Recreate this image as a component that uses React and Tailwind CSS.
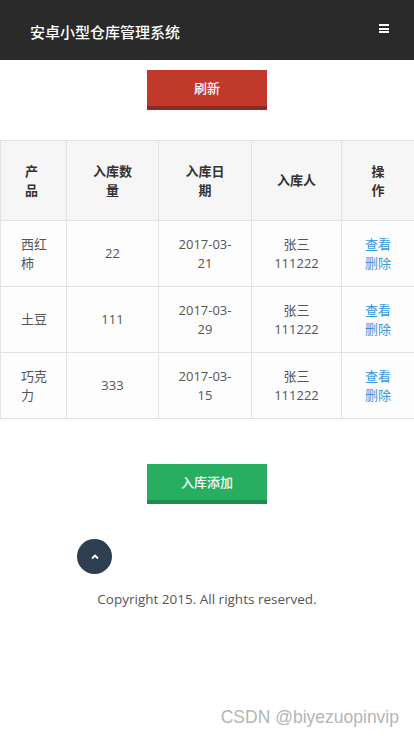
import React from "react";

const rows = [
  { name: ["西红", "柿"], qty: "22", date: ["2017-03-", "21"] },
  { name: ["土豆"], qty: "111", date: ["2017-03-", "29"] },
  { name: ["巧克", "力"], qty: "333", date: ["2017-03-", "15"] },
];

const font = { fontFamily: '"Open Sans", "Noto Sans CJK SC", sans-serif' };

const Lines = ({ parts }) => parts.map((p, i) => (
  <React.Fragment key={i}>
    {p}
    {i < parts.length - 1 && <br />}
  </React.Fragment>
));

export default function App() {
  return (
    <div className="relative min-h-[736px] bg-white text-[13px] leading-[1.42857] text-[#555]" style={font}>
      {/* header */}
      <div className="h-[60px] bg-[#2a2a2a] flex items-center justify-between pl-[30px] pr-[25px]">
        <h1 className="text-[15px] font-medium text-white pt-[6px]">安卓小型仓库管理系统</h1>
        <div className="flex flex-col gap-[1.5px] -mt-[3px]">
          <span className="block w-[10px] h-[2px] bg-white" />
          <span className="block w-[10px] h-[2px] bg-white" />
          <span className="block w-[10px] h-[2px] bg-white" />
        </div>
      </div>

      <div className="flex justify-center pt-[10px]">
        <button className="w-[120px] h-[40px] bg-[#c0392b] border-b-4 border-[#8e2b21] text-white text-[13px] font-medium">
          刷新
        </button>
      </div>

      {/* table */}
      <table className="mt-[30px] w-[414px] border border-[#cfcfcf] border-collapse table-fixed">
        <colgroup>
          <col className="w-[66px]" />
          <col className="w-[92px]" />
          <col className="w-[93px]" />
          <col className="w-[90px]" />
          <col className="w-[73px]" />
        </colgroup>
        <thead>
          <tr className="h-[80px] bg-[#f6f6f6] text-[#333] font-bold">
            <th className="border border-[#e3e3e3] align-middle text-center pr-[4px]">产<br />品</th>
            <th className="border border-[#e3e3e3] align-middle text-center">入库数<br />量</th>
            <th className="border border-[#e3e3e3] align-middle text-center">入库日<br />期</th>
            <th className="border border-[#e3e3e3] align-middle text-center">入库人</th>
            <th className="border border-[#e3e3e3] align-middle text-center">操<br />作</th>
          </tr>
        </thead>
        <tbody>
          {rows.map((r, i) => (
            <tr key={i} className="h-[66px] bg-[#fdfdfd]">
              <td className="border border-[#e3e3e3] align-middle text-left pl-[20px]">
                <Lines parts={r.name} />
              </td>
              <td className="border border-[#e3e3e3] align-middle text-center">{r.qty}</td>
              <td className="border border-[#e3e3e3] align-middle text-center">
                <Lines parts={r.date} />
              </td>
              <td className="border border-[#e3e3e3] align-middle text-center">
                张三<br />111222
              </td>
              <td className="border border-[#e3e3e3] align-middle text-center">
                <a className="text-[#3498db] cursor-pointer">查看</a>
                <br />
                <a className="text-[#3498db] cursor-pointer">删除</a>
              </td>
            </tr>
          ))}
        </tbody>
      </table>

      <div className="flex justify-center mt-[45px]">
        <button className="w-[120px] h-[40px] bg-[#27ae60] border-b-4 border-[#1f8a4c] text-white text-[13px] font-medium">
          入库添加
        </button>
      </div>

      <div className="mt-[35px] ml-[77px] w-[35px] h-[35px] rounded-full bg-[#2c3e50] flex items-center justify-center">
        <svg width="8" height="6" viewBox="0 0 8 6">
          <path d="M1 4.5 L4 1.5 L7 4.5" fill="none" stroke="white" strokeWidth="1.8" />
        </svg>
      </div>

      <p className="mt-[16px] text-center text-[13.5px] text-[#555]">Copyright 2015. All rights reserved.</p>

      {/* watermark */}
      <div
        className="absolute right-[15px] top-[705px] text-[17.5px] text-[#b5b5b5]"
        style={{ fontFamily: '"Liberation Sans", Arial, sans-serif', textShadow: "0 0 2px #fff" }}
      >
        CSDN @biyezuopinvip
      </div>
    </div>
  );
}
